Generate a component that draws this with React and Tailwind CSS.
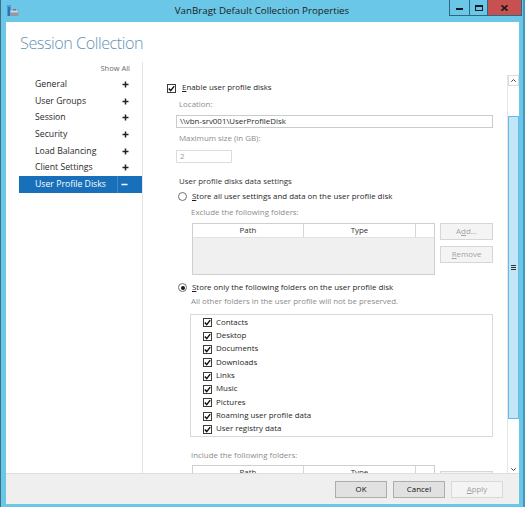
import React from 'react';

const navItems = ['General', 'User Groups', 'Session', 'Security', 'Load Balancing', 'Client Settings'];
const folders = ['Contacts', 'Desktop', 'Documents', 'Downloads', 'Links', 'Music', 'Pictures', 'Roaming user profile data', 'User registry data'];

function Check() {
  return (
    <span className="w-[9px] h-[9px] border border-[#3a3a3a] bg-white flex items-center justify-center shrink-0">
      <svg width="7" height="7" viewBox="0 0 7 7">
        <path d="M0.8 3.6 L2.7 5.6 L6.2 1.1" fill="none" stroke="#111" strokeWidth="1.4" />
      </svg>
    </span>
  );
}

function Radio({ on }) {
  return (
    <span className="w-[9px] h-[9px] rounded-full border border-[#707070] bg-white flex items-center justify-center shrink-0">
      {on && <span className="w-[4px] h-[4px] rounded-full bg-[#1a1a1a]" />}
    </span>
  );
}

function Sign({ minus, color = '#222' }) {
  return (
    <svg width="7" height="7" viewBox="0 0 7 7">
      <path d={minus ? 'M0.5 3.5 H6.5' : 'M3.5 0.5 V6.5 M0.5 3.5 H6.5'} stroke={color} strokeWidth="1.5" />
    </svg>
  );
}

function FolderTable() {
  return (
    <div className="w-[243px] h-[52px] border border-[#cfcfcf] bg-[#f0f0f0] flex flex-col">
      <div className="h-[14px] bg-white flex border-b border-[#e2e2e2] text-[#333]">
        <div className="w-[111px] border-r border-[#d6d6d6] flex items-center justify-center">Path</div>
        <div className="w-[112px] border-r border-[#d6d6d6] flex items-center justify-center">Type</div>
        <div className="flex-1" />
      </div>
    </div>
  );
}

function SmallButton({ children }) {
  return (
    <div className="w-[53px] h-[17px] border border-[#d6d6d6] bg-[#f4f4f4] text-[#a3a3a3] flex items-center justify-center">
      {children}
    </div>
  );
}

function DialogButton({ children, disabled }) {
  return (
    <div
      className={`w-[52px] h-[17px] border flex items-center justify-center ${
        disabled ? 'border-[#d9d9d9] bg-[#f4f4f4] text-[#a0a0a0]' : 'border-[#adadad] bg-[#e1e1e1] text-[#111]'
      }`}
    >
      {children}
    </div>
  );
}

export default function App() {
  return (
    <div className="w-[525px] h-[507px] bg-[#6bc7e7] border-l border-l-[#3d6f88] border-r-2 border-r-[#4596bd] flex flex-col font-['Open_Sans','Noto_Sans',sans-serif] text-[7.9px] leading-none text-[#1f1f1f] overflow-hidden">
      {/* title bar */}
      <div className="h-[22px] shrink-0 grid grid-cols-[1fr_auto_1fr]">
        <div className="pl-[6px] pt-[5px]">
          <svg width="12" height="12" viewBox="0 0 12 12">
            <rect x="0.5" y="0" width="3" height="11" fill="#2d6fc0" />
            <rect x="1" y="0.5" width="2" height="1" fill="#9cc7f0" />
            <rect x="3" y="5" width="8.5" height="6" fill="#8e9aa5" />
            <rect x="3.5" y="5.5" width="7.5" height="2" fill="#cfd6dc" />
            <rect x="6" y="4" width="3" height="1.2" fill="#6c7680" />
          </svg>
        </div>
        <div className="flex items-center text-[9.75px] text-[#1b1b1b]">VanBragt Default Collection Properties</div>
        <div className="flex justify-end items-start pr-[1px]">
          <div className="flex h-[16px] border-x border-b border-[#2f6680]">
            <div className="w-[20px] border-r border-[#2f6680] flex items-center justify-center">
              <span className="w-[7px] h-[2px] bg-[#1a1a1a] mt-[3px]" />
            </div>
            <div className="w-[18px] border-r border-[#2f6680] flex items-center justify-center">
              <span className="w-[8px] h-[6px] border border-[#1a1a1a] border-t-2" />
            </div>
            <div className="w-[33px] bg-[#c75050] flex items-center justify-center">
              <svg width="7" height="6" viewBox="0 0 7 6">
                <path d="M0.5 0.3 L6.5 5.7 M6.5 0.3 L0.5 5.7" stroke="#1a1a1a" strokeWidth="1.6" />
              </svg>
            </div>
          </div>
        </div>
      </div>

      {/* client area */}
      <div className="ml-[5px] mr-[4px] h-[482px] shrink-0 bg-white flex flex-col">
        <div className="h-[40px] shrink-0 pl-[14px] pt-[13px]">
          <div className="text-[16.2px] font-light tracking-[-0.45px] text-[#5f93b6]">Session Collection</div>
        </div>

        <div className="h-[411px] shrink-0 flex">
          {/* nav */}
          <div className="w-[137px] shrink-0 border-r border-[#e4e4e4] text-[8.7px] text-[#2a2a2a]">
            <div className="h-[14px] flex items-center justify-end pr-[12px] text-[7.5px] text-[#6a6a6a]">Show All</div>
            {navItems.map((n) => (
              <div key={n} className="h-[16.7px] ml-[13px] flex items-center">
                <div className="w-[99px] pl-[16px]">{n}</div>
                <div className="pl-[4px] flex items-center">
                  <Sign />
                </div>
              </div>
            ))}
            <div className="h-[16.7px] ml-[13px] flex items-center bg-[#1770b9] text-white">
              <div className="w-[99px] pl-[16px] h-full flex items-center border-r border-[#3c8ac8]">User Profile Disks</div>
              <div className="pl-[3px] flex items-center">
                <Sign minus color="#fff" />
              </div>
            </div>
          </div>

          {/* content */}
          <div className="flex-1 overflow-hidden pt-[19px]">
            <div className="h-[14px] pl-[24px] flex items-center gap-[6px]">
              <Check />
              <span><span className="underline">E</span>nable user profile disks</span>
            </div>
            <div className="h-[20px] pl-[36px] flex items-center text-[#8c8c8c]">Location:</div>
            <div className="ml-[33px] w-[317px] h-[13px] border border-[#cbcbcb] flex items-center pl-[3px] text-[#2a2a2a]">
              \\vbn-srv001\UserProfileDisk
            </div>
            <div className="h-[22px] pl-[36px] flex items-center text-[#8c8c8c]">Maximum size (in GB):</div>
            <div className="ml-[33px] w-[56px] h-[13px] border border-[#dcdcdc] flex items-center pl-[3px] text-[#9a9a9a]">2</div>
            <div className="h-[11px]" />
            <div className="h-[16px] pl-[36px] flex items-center text-[#333]">User profile disks data settings</div>
            <div className="h-[13px] pl-[35px] flex items-center gap-[5px]">
              <Radio />
              <span><span className="underline">S</span>tore all user settings and data on the user profile disk</span>
            </div>
            <div className="h-[20px] pl-[48px] flex items-center text-[#8c8c8c]">Exclude the following folders:</div>
            <div className="ml-[49px] flex gap-[5px]">
              <FolderTable />
              <div className="flex flex-col gap-[6px]">
                <SmallButton>A<span className="underline">d</span>d...</SmallButton>
                <SmallButton><span className="underline">R</span>emove</SmallButton>
              </div>
            </div>
            <div className="h-[5px]" />
            <div className="h-[15px] pl-[35px] flex items-center gap-[5px]">
              <Radio on />
              <span><span className="underline">S</span>tore only the following folders on the user profile disk</span>
            </div>
            <div className="h-[13px] pl-[48px] flex items-center text-[#8c8c8c]">All other folders in the user profile will not be preserved.</div>
            <div className="h-[6px]" />
            <div className="ml-[47px] w-[303px] h-[123px] border border-[#d9d9d9] pt-[1px] pl-[12px]">
              {folders.map((f) => (
                <div key={f} className="h-[13.35px] flex items-center gap-[4px]">
                  <Check />
                  <span>{f}</span>
                </div>
              ))}
            </div>
            <div className="h-[9px]" />
            <div className="h-[19px] pl-[48px] flex items-center text-[#8c8c8c]">Include the following folders:</div>
            <div className="ml-[49px] flex gap-[5px]">
              <FolderTable />
              <div className="pt-[6px]">
                <SmallButton>A<span className="underline">d</span>d...</SmallButton>
              </div>
            </div>
          </div>

          {/* scrollbar */}
          <div className="w-[12px] shrink-0 mt-[13px] border-l border-[#e6e6e6] flex flex-col">
            <div className="h-[11px] border border-[#dcdcdc] bg-white flex items-center justify-center">
              <svg width="5" height="3" viewBox="0 0 5 3">
                <path d="M0.3 2.7 L2.5 0.5 L4.7 2.7" fill="none" stroke="#444" strokeWidth="1" />
              </svg>
            </div>
            <div className="h-[30px]" />
            <div className="h-[303px] bg-[#c3e5f8] border border-[#62bde4] flex items-center justify-center">
              <div className="flex flex-col gap-[1px]">
                <span className="w-[5px] h-[1px] bg-[#333]" />
                <span className="w-[5px] h-[1px] bg-[#333]" />
                <span className="w-[5px] h-[1px] bg-[#333]" />
              </div>
            </div>
            <div className="flex-1 flex items-end justify-center pb-[2px]">
              <svg width="5" height="3" viewBox="0 0 5 3">
                <path d="M0.3 0.3 L2.5 2.5 L4.7 0.3" fill="none" stroke="#444" strokeWidth="1" />
              </svg>
            </div>
          </div>
        </div>

        {/* footer */}
        <div className="h-[31px] shrink-0 bg-[#efefef] border-t border-[#dedede] flex justify-end items-start pt-[7px] pr-[16px] gap-[6px]">
          <DialogButton>OK</DialogButton>
          <DialogButton>Cancel</DialogButton>
          <DialogButton disabled><span className="underline">A</span>pply</DialogButton>
        </div>
      </div>
    </div>
  );
}
